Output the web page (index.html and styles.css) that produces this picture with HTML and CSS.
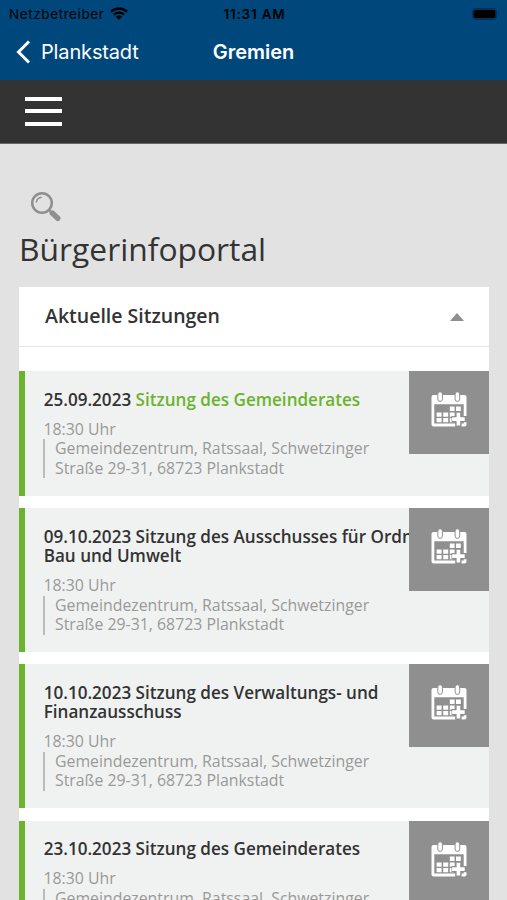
FILE: index.html
```
<!DOCTYPE html>
<html lang="de">

<head>
    <meta charset="utf-8">
    <title>Gremien - Plankstadt</title>
    <link rel="stylesheet" href="styles.css">
</head>

<body>
    <!-- calendar icon, used by every entry -->
    <svg class="sprite" width="0" height="0">
        <symbol id="calendar" viewBox="0 0 36 36">
            <path fill="#fff" fill-rule="evenodd" d="M2.5 4h31q2 0 2 2v27.5q0 2-2 2h-31q-2 0-2-2V6q0-2 2-2zM3.3 13.2v19.4h29.4V13.2z" />
            <g fill="#fff" stroke="#8f8f8f" stroke-width="1">
                <rect x="6.8" y="0.8" width="4.6" height="9.6" rx="2.3" />
                <rect x="24.1" y="0.8" width="4.6" height="9.6" rx="2.3" />
            </g>
            <path fill="#fff" d="M18.8 15.5h4.8v4.6h-4.8zM25 15.5h4.8v4.6H25zM5.6 21.4h5v4.4h-5zM12.2 21.4h5v4.4h-5zM18.8 21.4h4.8v4.4h-4.8zM5.6 27h5v4.2h-5zM12.2 27h5v4.2h-5zM18.8 27h4v4.2h-4z" />
            <path fill="none" stroke="#8f8f8f" stroke-width="6.4" d="M27.4 20.6v18M20.5 28.1h18" />
            <path fill="none" stroke="#fff" stroke-width="3.6" d="M27.4 21.8v12.6M21.1 28.1h12.6" />
        </symbol>
    </svg>

    <header class="appbar">
        <div class="status">
            <div class="carrier">
                <span>Netzbetreiber</span>
                <svg class="wifi" viewBox="0 0 18 13">
                    <g fill="none" stroke="#000" stroke-width="2.3">
                        <path d="M1 4.7a11.6 11.6 0 0 1 16 0" />
                        <path d="M3.9 7.8a7.3 7.3 0 0 1 10.2 0" />
                    </g>
                    <path d="M9 12.8L5.9 9.7a4.5 4.5 0 0 1 6.2 0z" />
                </svg>
            </div>
            <span class="clock">11:31 AM</span>
            <svg class="battery" viewBox="0 0 28 12">
                <rect x="0.5" y="0.5" width="24" height="11" rx="3" fill="none" stroke="#00315a" />
                <rect x="1.5" y="1.8" width="22" height="8.4" rx="1.8" />
                <path d="M26 4q1.5 2 0 4z" fill="#00315a" />
            </svg>
        </div>
        <nav class="navbar">
            <a class="back" href="#">
                <svg viewBox="0 0 15 24">
                    <path d="M13 1.5L2.5 12L13 22.5" fill="none" stroke="#fff" stroke-width="3" />
                </svg>
                <span>Plankstadt</span>
            </a>
            <span class="title">Gremien</span>
        </nav>
    </header>

    <div class="menubar">
        <div class="burger">
            <span></span>
            <span></span>
            <span></span>
        </div>
    </div>

    <main>
        <svg class="search" viewBox="0 0 32 32">
            <circle cx="12" cy="12" r="9.8" fill="none" stroke="#8f8f8f" stroke-width="2.5" />
            <path d="M6.3 11.5a6 6 0 0 1 5.4-5.2" fill="none" stroke="#8f8f8f" stroke-width="1.5" />
            <path d="M18.8 18.8l3 3" stroke="#8f8f8f" stroke-width="2" />
            <path d="M22.2 22l5.6 5.3" stroke="#8f8f8f" stroke-width="5.4" stroke-linecap="round" />
        </svg>
        <h1>Bürgerinfoportal</h1>

        <section class="panel">
            <div class="panel-head">
                <h2>Aktuelle Sitzungen</h2>
                <span class="arrow"></span>
            </div>

            <article class="item">
                <div class="text">
                    <h3>25.09.2023 <a href="#">Sitzung des Gemeinderates</a></h3>
                    <p>18:30 Uhr</p>
                    <p class="place">Gemeindezentrum, Ratssaal, Schwetzinger<br>Straße 29-31, 68723 Plankstadt</p>
                </div>
                <div class="add"><svg><use href="#calendar" /></svg></div>
            </article>

            <article class="item">
                <div class="text">
                    <h3>09.10.2023 Sitzung des Ausschusses für Ordnung,<br>Bau und Umwelt</h3>
                    <p>18:30 Uhr</p>
                    <p class="place">Gemeindezentrum, Ratssaal, Schwetzinger<br>Straße 29-31, 68723 Plankstadt</p>
                </div>
                <div class="add"><svg><use href="#calendar" /></svg></div>
            </article>

            <article class="item">
                <div class="text">
                    <h3>10.10.2023 Sitzung des Verwaltungs- und<br>Finanzausschuss</h3>
                    <p>18:30 Uhr</p>
                    <p class="place">Gemeindezentrum, Ratssaal, Schwetzinger<br>Straße 29-31, 68723 Plankstadt</p>
                </div>
                <div class="add"><svg><use href="#calendar" /></svg></div>
            </article>

            <article class="item">
                <div class="text">
                    <h3>23.10.2023 Sitzung des Gemeinderates</h3>
                    <p>18:30 Uhr</p>
                    <p class="place">Gemeindezentrum, Ratssaal, Schwetzinger<br>Straße 29-31, 68723 Plankstadt</p>
                </div>
                <div class="add"><svg><use href="#calendar" /></svg></div>
            </article>
        </section>
    </main>
</body>

</html>
```
FILE: styles.css
```
* {
    box-sizing: border-box;
    margin: 0;
    padding: 0;
}

body {
    height: 900px;
    overflow: hidden;
    background-color: #e2e2e2;
    color: #333;
    font-family: "Open Sans", sans-serif;
}

a {
    text-decoration: none;
}

svg {
    display: block;
}

.sprite {
    position: absolute;
}

/* status bar and navigation */
.appbar {
    height: 80px;
    background-color: #00477c;
    font-family: Inter, sans-serif;
}

.status {
    display: grid;
    grid-template-columns: 1fr auto 1fr;
    align-items: center;
    height: 27px;
    padding: 0 7px 0 9px;
    font-size: 13.5px;
    letter-spacing: 0.6px;
    color: #000;
}

.carrier {
    display: flex;
    align-items: center;
    gap: 6px;
}

.wifi {
    width: 18px;
    height: 13px;
}

.clock {
    font-weight: 600;
    letter-spacing: 0.8px;
}

.battery {
    width: 28px;
    height: 12px;
    justify-self: end;
}

.navbar {
    display: grid;
    grid-template-columns: 1fr auto 1fr;
    align-items: center;
    height: 50px;
    padding: 0 16px;
    font-size: 20px;
    color: #fff;
}

.back {
    display: flex;
    align-items: center;
    gap: 10px;
    letter-spacing: -0.15px;
    color: #fff;
}

.back svg {
    width: 15px;
    height: 24px;
}

.title {
    font-weight: 600;
}

.menubar {
    height: 64px;
    padding: 17px 25px;
    background-color: #333;
    border-bottom: 1px solid #666;
}

.burger {
    display: flex;
    flex-direction: column;
    gap: 8.4px;
    width: 37px;
}

.burger span {
    height: 4px;
    background-color: #fff;
}

/* content */
main {
    padding: 47px 18px 0 19px;
}

.search {
    width: 32px;
    height: 32px;
    margin-left: 11px;
}

h1 {
    height: 45px;
    margin-bottom: 19px;
    font-size: 31.8px;
    font-weight: 400;
    line-height: 52px;
}

.panel {
    background-color: #fff;
}

.panel-head {
    display: flex;
    justify-content: space-between;
    align-items: center;
    height: 60px;
    margin-bottom: 24.2px;
    padding: 0 25px 0 26px;
    border-bottom: 1px solid #e6e6e6;
}

h2 {
    padding-bottom: 2px;
    font-size: 19.5px;
    font-weight: 600;
}

.arrow {
    border: 7px solid transparent;
    border-top: 0;
    border-bottom: 8px solid #8f8f8f;
}

.item {
    display: flex;
    align-items: flex-start;
    margin-bottom: 12.3px;
    background-color: #f0f2f1;
    border-left: 6px solid #6ab42d;
}

.text {
    flex: 1;
    min-width: 0;
    padding: 18.6px 0 17.4px 18px;
    overflow: hidden;
    font-size: 15.85px;
    line-height: 19.5px;
    white-space: nowrap;
    color: #999;
}

h3 {
    margin-bottom: 10.5px;
    padding-left: 0.7px;
    font-size: 17.08px;
    font-weight: 600;
    color: #333;
}

h3 a {
    color: #6ab42d;
}

.text p {
    padding-left: 0.5px;
}

.text .place {
    padding-left: 10px;
    border-left: 2px solid #bbb;
}

.add {
    width: 80px;
    height: 83px;
    padding: 20px 0 0 22px;
    background-color: #8f8f8f;
}

.add svg {
    width: 36px;
    height: 36px;
}
```
